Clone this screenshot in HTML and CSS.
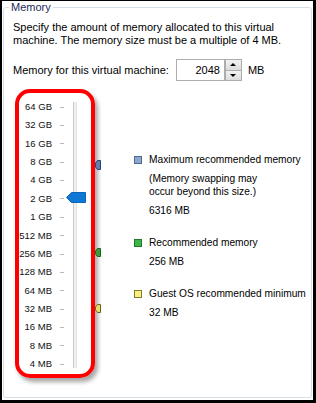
FILE: index.html
```html
<!DOCTYPE html>
<html lang="en">
<head>
    <meta charset="UTF-8">
    <meta name="viewport" content="width=device-width, initial-scale=1.0">
    <title>Memory</title>
    <link rel="stylesheet" href="styles.css">
</head>
<body>
    <div class="frame">
        <fieldset class="group">
            <legend>Memory</legend>
            <p class="intro">Specify the amount of memory allocated to this virtual machine. The memory size must be a multiple of 4 MB.</p>

            <div class="mem-row">
                <label for="mem">Memory for this virtual machine:</label>
                <div class="spin">
                    <input type="text" id="mem" value="2048">
                    <div class="spin-btns">
                        <button class="spin-up"><span class="arrow-up"></span></button>
                        <button class="spin-down"><span class="arrow-down"></span></button>
                    </div>
                </div>
                <span class="unit">MB</span>
            </div>

            <div class="slider-area">
                <div class="scale">
                    <div class="labels">
                        <span>64 GB</span>
                        <span>32 GB</span>
                        <span>16 GB</span>
                        <span>8 GB</span>
                        <span>4 GB</span>
                        <span>2 GB</span>
                        <span>1 GB</span>
                        <span>512 MB</span>
                        <span>256 MB</span>
                        <span>128 MB</span>
                        <span>64 MB</span>
                        <span>32 MB</span>
                        <span>16 MB</span>
                        <span>8 MB</span>
                        <span>4 MB</span>
                    </div>
                    <div class="ticks">
                        <i></i><i></i><i></i><i></i><i></i>
                        <i></i><i></i><i></i><i></i><i></i>
                        <i></i><i></i><i></i><i></i><i></i>
                    </div>
                    <div class="track">
                        <svg class="thumb" width="20" height="11" viewBox="0 0 20 11">
                            <path d="M0.5 5.5 L5.5 0.5 H19.5 V10.5 H5.5 Z" fill="#0f78d4" stroke="#0b65b8"/>
                        </svg>
                    </div>
                </div>

                <!-- recommended markers, on the right side of the slider -->
                <svg class="marker marker-max" width="6" height="10" viewBox="0 0 6 10">
                    <path d="M0.5 3 L2.5 0.5 H5.5 V9.5 H2.5 L0.5 7 Z" fill="#5f7fae" stroke="#2c4670"/>
                </svg>
                <svg class="marker marker-rec" width="6" height="9" viewBox="0 0 6 9">
                    <path d="M0.5 3 L2.5 0.5 H5.5 V8.5 H2.5 L0.5 6 Z" fill="#3a9a3e" stroke="#1d6321"/>
                </svg>
                <svg class="marker marker-min" width="6" height="9" viewBox="0 0 6 9">
                    <path d="M0.5 3 L2.5 0.5 H5.5 V8.5 H2.5 L0.5 6 Z" fill="#e3dc6a" stroke="#6b6522"/>
                </svg>

                <div class="legend">
                    <div class="item">
                        <div class="item-title"><span class="swatch swatch-max"></span>Maximum recommended memory</div>
                        <div class="item-note">(Memory swapping may<br>occur beyond this size.)</div>
                        <div class="item-value">6316 MB</div>
                    </div>
                    <div class="item">
                        <div class="item-title"><span class="swatch swatch-rec"></span>Recommended memory</div>
                        <div class="item-value">256 MB</div>
                    </div>
                    <div class="item">
                        <div class="item-title"><span class="swatch swatch-min"></span>Guest OS recommended minimum</div>
                        <div class="item-value">32 MB</div>
                    </div>
                </div>
            </div>
        </fieldset>
    </div>
</body>
</html>
```

FILE: styles.css
```css
body {
    margin: 0;
    background-color: #fff;
    font-family: "Liberation Sans", Arial, sans-serif;
    font-size: 11px;
    color: #000;
}
.frame {
    width: 316px;
    height: 403px;
    box-sizing: border-box;
    border-style: solid;
    border-color: #000;
    border-width: 1px 3px 3px 2px;
    display: flex;
    flex-direction: column;
    background: #fff;
}
.group {
    flex: 1;
    margin: 0 1px 2px 1px;
    padding: 0 0 0 9px;
    border: 1px solid #d5dfe5;
    border-radius: 3px;
    min-width: 0;
}
.group legend {
    margin-left: -4px;
    padding: 0 2px;
    line-height: 13px;
    color: #1b2a5a;
}
.intro {
    margin: 7px 0 0 0;
    line-height: 13px;
    width: 285px;
}
.mem-row {
    display: flex;
    align-items: center;
    margin-top: 12px;
}
.mem-row label {
    margin-right: 7px;
}
.spin {
    display: flex;
    height: 22px;
}
.spin input {
    width: 49px;
    height: 22px;
    box-sizing: border-box;
    border: 1px solid #abadb3;
    padding: 0 4px 0 0;
    text-align: right;
    font-family: inherit;
    font-size: 11px;
    outline: none;
}
.spin-btns {
    display: flex;
    flex-direction: column;
    width: 17px;
}
.spin-btns button {
    flex: 1;
    padding: 0;
    margin: 0;
    border: 1px solid #acacac;
    background: linear-gradient(#f2f2f2, #dcdcdc);
    display: flex;
    align-items: center;
    justify-content: center;
}
.spin-down {
    border-top: none !important;
}
.arrow-up {
    border-left: 3px solid transparent;
    border-right: 3px solid transparent;
    border-bottom: 3px solid #000;
}
.arrow-down {
    border-left: 3px solid transparent;
    border-right: 3px solid transparent;
    border-top: 3px solid #000;
}
.unit {
    margin-left: 6px;
}

.slider-area {
    position: relative;
    display: flex;
    margin-top: 8px;
}
.scale {
    display: flex;
    margin-left: 2px;
    width: 80px;
    height: 289px;
    box-sizing: border-box;
    border: 4px solid #f00;
    border-radius: 15px;
    box-shadow: 3px 4px 4px rgba(0, 0, 0, 0.35);
    padding-top: 5px;
}
.labels {
    display: flex;
    flex-direction: column;
    width: 33px;
    font-size: 9.5px;
    color: #111;
}
.labels span {
    height: 18.36px;
    line-height: 18.36px;
    white-space: nowrap;
    display: flex;
    justify-content: flex-end;
}
.ticks {
    display: flex;
    flex-direction: column;
    margin-left: 8px;
}
.ticks i {
    height: 18.36px;
    display: flex;
    align-items: center;
}
.ticks i::before {
    content: "";
    width: 4px;
    height: 1px;
    background: #b8b8b8;
}
.track {
    position: relative;
    margin: 4px 0 2px 9px;
    width: 2px;
    border-left: 1px solid #c9c9c9;
    border-right: 1px solid #e4e4e4;
    background: #f0f0f0;
    height: 266px;
}
.thumb {
    position: absolute;
    left: -8px;
    top: 90px;
}
.marker {
    position: absolute;
    left: 82px;
}
.marker-max {
    top: 71px;
}
.marker-rec {
    top: 159px;
}
.marker-min {
    top: 215px;
}

.legend {
    margin-left: 54px;
    padding-top: 64px;
    line-height: 13px;
    font-size: 10.2px;
    white-space: nowrap;
}
.item {
    margin-bottom: 19px;
}
.item-title {
    display: flex;
    align-items: center;
    margin-left: -15px;
}
.item-note,
.item-value {
    margin-top: 6px;
}
.swatch {
    width: 6px;
    height: 6px;
    margin-right: 7px;
    border: 1px solid;
}
.swatch-max {
    background: #8ea7cb;
    border-color: #4b6a98;
}
.swatch-rec {
    background: #3cb449;
    border-color: #1f7a2a;
}
.swatch-min {
    background: #f6f17c;
    border-color: #7f7a33;
}
```
